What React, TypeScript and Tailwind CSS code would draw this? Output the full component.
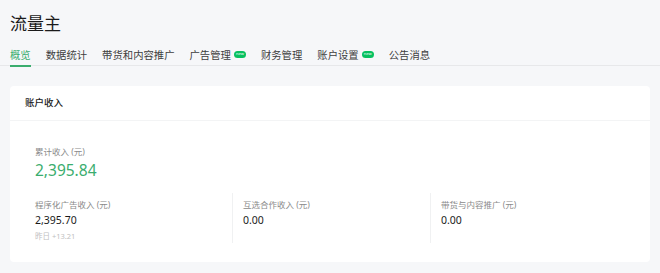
const tabs = [
  { label: '概览', active: true },
  { label: '数据统计' },
  { label: '带货和内容推广' },
  { label: '广告管理', badge: true },
  { label: '财务管理' },
  { label: '账户设置', badge: true },
  { label: '公告消息' },
];

const stats = [
  { label: '程序化广告收入 (元)', value: '2,395.70', sub: '昨日 +13.21' },
  { label: '互选合作收入 (元)', value: '0.00' },
  { label: '带货与内容推广 (元)', value: '0.00' },
];

function Badge() {
  return (
    <span className="ml-[3px] inline-flex h-[7px] w-[12px] items-center justify-center rounded-full bg-[#07c160] text-[4px] leading-none text-white">
      new
    </span>
  );
}

export default function App() {
  return (
    <div
      className="h-[273px] w-[660px] overflow-hidden bg-[#f6f7f9] text-[#353535]"
      style={{ fontFamily: '"Noto Sans", "Noto Sans CJK SC", sans-serif' }}
    >
      <h1 className="pl-[10px] pt-[12px] text-[17px] leading-[24px] text-[#1a1a1a]">流量主</h1>

      <nav className="mt-[11px] flex h-[19px] items-start gap-[15px] border-b border-[#e7e8ea] pl-[10px]">
        {tabs.map((t) => (
          <div
            key={t.label}
            className={
              'relative flex h-[19px] items-start text-[10.35px] leading-[16px] ' +
              (t.active ? 'text-[#3aad6e]' : 'text-[#3e3e3e]')
            }
          >
            <span>{t.label}</span>
            {t.badge && (
              <span className="flex h-[14px] items-center">
                <Badge />
              </span>
            )}
            {t.active && <span className="absolute bottom-[-1px] left-0 h-[2px] w-full bg-[#3aad6e]" />}
          </div>
        ))}
      </nav>

      <section className="mx-[10px] mt-[20px] rounded-[4px] bg-white">
        <div className="flex h-[35px] items-center border-b border-[#f3f4f5] pl-[15px] text-[9.5px] font-medium text-[#1a1a1a]">
          账户收入
        </div>
        <div className="px-[25px] pb-[19px] pt-[25px]">
          <div>
            <div className="text-[8.5px] leading-[12px] text-[#8a8a8a]">累计收入 (元)</div>
            <div className="text-[15.5px] leading-[24px] text-[#3aad6e]">2,395.84</div>
          </div>
          <div className="mt-[11px] grid grid-cols-[197px_198px_198px]">
            {stats.map((s, i) => (
              <div
                key={s.label}
                className={'h-[50px] ' + (i > 0 ? 'border-l border-[#f0f1f2] pl-[10px]' : '')}
              >
                <div className="pt-[6px] text-[8.5px] leading-[12px] text-[#8a8a8a]">{s.label}</div>
                <div className="text-[10.5px] leading-[18px] text-[#1a1a1a]">{s.value}</div>
                {s.sub && <div className="mt-[1px] text-[7.5px] leading-[12px] text-[#c0c0c0]">{s.sub}</div>}
              </div>
            ))}
          </div>
        </div>
      </section>
    </div>
  );
}
